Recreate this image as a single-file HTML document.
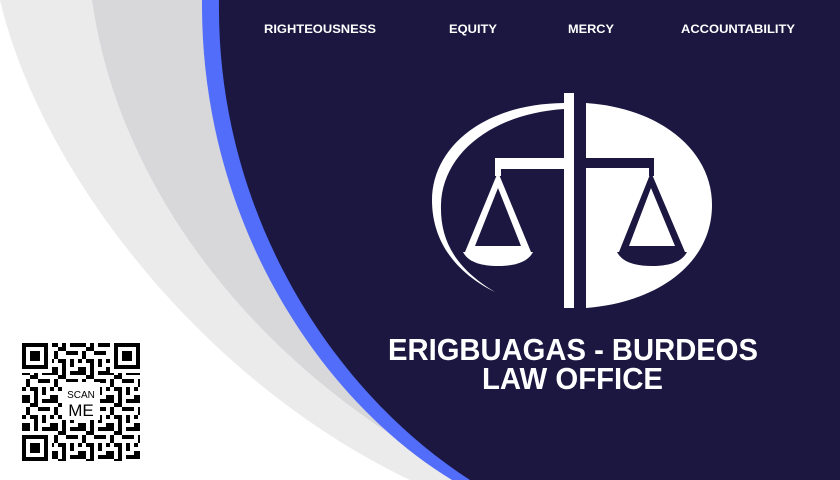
<!DOCTYPE html>
<html><head><meta charset="utf-8"><style>
html,body{margin:0;padding:0;width:840px;height:480px;overflow:hidden;background:#fff}
svg{display:block}
text{font-family:"Liberation Sans",sans-serif;font-weight:bold;fill:#fff}
</style></head><body>
<svg width="840" height="480" viewBox="0 0 840 480" xmlns="http://www.w3.org/2000/svg">
<defs>
<pattern id="qr" width="28" height="28" patternUnits="userSpaceOnUse" x="22" y="343">
<g fill="#000">
<rect x="0" y="0" width="8" height="4"/><rect x="12" y="0" width="4" height="8"/><rect x="20" y="0" width="8" height="4"/>
<rect x="4" y="8" width="4" height="8"/><rect x="16" y="8" width="8" height="4"/><rect x="0" y="16" width="4" height="4"/>
<rect x="8" y="16" width="8" height="4"/><rect x="20" y="16" width="4" height="8"/><rect x="0" y="24" width="8" height="4"/>
<rect x="12" y="20" width="4" height="8"/><rect x="24" y="8" width="4" height="4"/><rect x="8" y="4" width="4" height="4"/>
</g></pattern>
</defs>
<path d="M0,0 C40,170 200,380 410,480 L0,480Z" fill="#fff"/>
<path d="M0,0 L92,0 C120,200 270,380 470,480 L410,480 C200,380 40,170 0,0Z" fill="#ebebeb"/>
<path d="M92,0 L202,0 C200,220 320,400 452,480 L470,480 C270,380 120,200 92,0Z" fill="#d8d7d9"/>
<path d="M202,0 L840,0 L840,480 L452,480 C320,400 200,220 202,0Z" fill="#516df9"/>
<path d="M219,0 L840,0 L840,480 L470,480 C330,390 216,210 219,0Z" fill="#1b1740"/>

<text x="264" y="33" font-size="11.5" textLength="112" lengthAdjust="spacingAndGlyphs">RIGHTEOUSNESS</text>
<text x="449" y="33" font-size="11.5" textLength="48" lengthAdjust="spacingAndGlyphs">EQUITY</text>
<text x="568" y="33" font-size="11.5" textLength="46" lengthAdjust="spacingAndGlyphs">MERCY</text>
<text x="681" y="33" font-size="11.5" textLength="114" lengthAdjust="spacingAndGlyphs">ACCOUNTABILITY</text>

<!-- logo -->
<g fill="#fff">
<!-- right D shape -->
<path d="M586,103 C660,108 712,150 712,205 C712,262 660,302 586,308 Z"/>
<!-- vertical bar -->
<rect x="564" y="93" width="10" height="215"/>
<!-- left crescent -->
<path d="M564,103 C480,104 432,150 432,200 C432,245 460,275 495,292 C455,268 440,240 441,205 C442,155 490,114 564,109 Z"/>
<!-- left beam -->
<rect x="495" y="158" width="69" height="11"/>
<rect x="495" y="158" width="6" height="18"/>
<!-- left scale -->
<path d="M498,172 L465,252 L531,252 Z M498,188 L475,246 L521,246 Z" fill-rule="evenodd"/>
<path d="M463,252 L533,252 C528,262 515,266 498,266 C481,266 468,262 463,252Z"/>
</g>
<g fill="#1b1740">
<rect x="586" y="158" width="68" height="10"/>
<rect x="649" y="158" width="5" height="18"/>
<path d="M651,172 L619,252 L685,252 Z M651,188 L629,246 L675,246 Z" fill-rule="evenodd"/>
<path d="M617,252 L687,252 C682,262 669,266 652,266 C635,266 622,262 617,252Z"/>
</g>

<text x="388" y="360" font-size="31" textLength="370" lengthAdjust="spacingAndGlyphs">ERIGBUAGAS - BURDEOS</text>
<text x="482" y="389" font-size="31" textLength="181" lengthAdjust="spacingAndGlyphs">LAW OFFICE</text>

<!-- QR -->
<rect x="22" y="343" width="118" height="118" fill="url(#qr)"/>
<g fill="#fff">
<rect x="22" y="343" width="30" height="30"/><rect x="110" y="343" width="30" height="30"/><rect x="22" y="431" width="30" height="30"/>
<rect x="62" y="382" width="38" height="38"/>
</g>
<g fill="none" stroke="#000" stroke-width="4">
<rect x="24" y="345" width="22" height="22"/><rect x="116" y="345" width="22" height="22"/><rect x="24" y="437" width="22" height="22"/>
</g>
<g fill="#000">
<rect x="30" y="351" width="10" height="10"/><rect x="122" y="351" width="10" height="10"/><rect x="30" y="443" width="10" height="10"/>
</g>
<text x="81" y="398" font-size="10" text-anchor="middle" style="fill:#000;font-weight:normal">SCAN</text>
<text x="81" y="416" font-size="17" text-anchor="middle" style="fill:#000;font-weight:normal">ME</text>
</svg>
</body></html>
